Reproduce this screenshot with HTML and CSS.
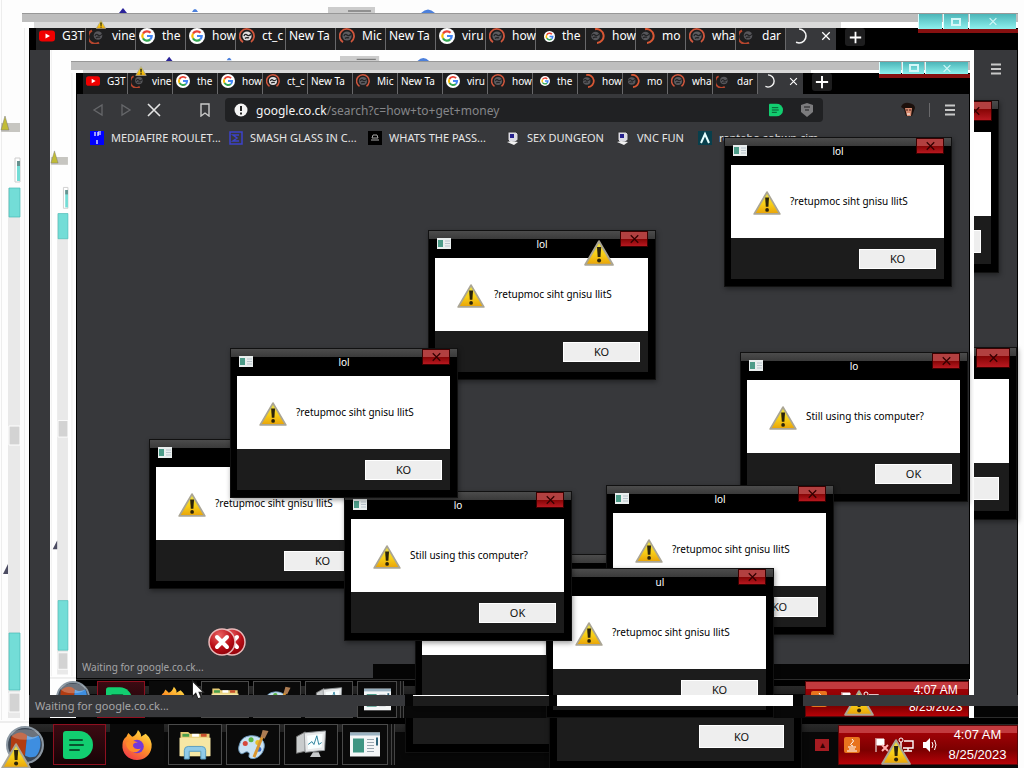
FILE: index.html
```html
<!DOCTYPE html>
<html lang="en">
<head>
<meta charset="utf-8">
<title>Desktop</title>
<link rel="stylesheet" href="styles.css">
</head>
<body>
<svg class="defs" aria-hidden="true">
  <defs>
    <linearGradient id="gold" x1="0" y1="0" x2="0" y2="1"><stop offset="0" stop-color="#e8e04a"/><stop offset=".55" stop-color="#f8cf18"/><stop offset="1" stop-color="#e8a208"/></linearGradient>
    <radialGradient id="redball" cx=".4" cy=".25" r=".8"><stop offset="0" stop-color="#ec6464"/><stop offset=".6" stop-color="#b80d16"/><stop offset="1" stop-color="#8c0008"/></radialGradient>
    <linearGradient id="fox" x1=".8" y1="0" x2=".2" y2="1"><stop offset="0" stop-color="#ffe14a"/><stop offset=".45" stop-color="#ff9a26"/><stop offset="1" stop-color="#f0354c"/></linearGradient>
  </defs>
  <symbol id="warn" viewBox="0 0 30 26"><path d="M15 1.2 28.8 24.8H1.2Z" fill="url(#gold)" stroke="#aaa594" stroke-width="2" stroke-linejoin="round"/><path d="M13 7h4.200l-.7 10h-2.800Z" fill="#2a230a"/><circle cx="15.100" cy="20.500" r="2" fill="#2a230a"/></symbol>
  <symbol id="error" viewBox="0 0 28 28"><circle cx="14" cy="14" r="13" fill="url(#redball)" stroke="#e8b8b8" stroke-width="1.500"/><path d="m9 9 10 10M19 9 9 19" stroke="#fff" stroke-width="4" stroke-linecap="round"/></symbol>
  <symbol id="yt" viewBox="0 0 16 16"><rect y="2.500" width="16" height="11" rx="3" fill="#f00000"/><path d="m6.500 5.500 4.500 2.500-4.500 2.500Z" fill="#fff"/></symbol>
  <symbol id="goog" viewBox="0 0 16 16"><circle cx="8" cy="8" r="8" fill="#fff"/><g fill="none" stroke-width="2.200"><path d="M11.500 4.800A4.700 4.700 0 0 0 4 5.600" stroke="#ea4335"/><path d="M4 5.600a4.700 4.700 0 0 0 0 4.800" stroke="#fbbc05"/><path d="M4 10.400a4.700 4.700 0 0 0 7.200 1" stroke="#34a853"/><path d="M11.200 11.400A4.600 4.600 0 0 0 12.700 8H8" stroke="#4285f4"/></g></symbol>
  <symbol id="swirl" viewBox="0 0 16 16"><path d="M3 2.500A7 7 0 1 0 10 14.600" fill="none" stroke="#b6462e" stroke-width="2"/><circle cx="9" cy="7.500" r="4.300" fill="#56565a"/><path d="M6 8c1-3 3-1 3-1s2 2 4-1M7 10c2-2 3 0 4-1" fill="none" stroke="#242426" stroke-width="1.200"/></symbol>
  <symbol id="swirlr" viewBox="0 0 16 16"><path d="M6 1.200A7 7 0 1 1 8 15" fill="none" stroke="#d85734" stroke-width="2"/><circle cx="6.500" cy="8" r="4.300" fill="#56565a"/><path d="M3 8c1-3 3-1 3-1s2 2 4-1M4 10c2-2 3 0 4-1" fill="none" stroke="#242426" stroke-width="1.200"/></symbol>
  <symbol id="swirlw" viewBox="0 0 16 16"><path d="M4 14.200A7.200 7.200 0 1 1 12 14" fill="none" stroke="#cf563c" stroke-width="1.800"/><circle cx="8" cy="8" r="4.600" fill="#e0dede"/><path d="M5 8c1-3 3-1 3-1s2 2 4-1M6 10.500c2-2 3 0 4-1" fill="none" stroke="#242426" stroke-width="1.400"/></symbol>
  <symbol id="swirlg" viewBox="0 0 16 16"><path d="M4 14.200A7.200 7.200 0 1 1 12 14" fill="none" stroke="#cf563c" stroke-width="1.800"/><circle cx="8" cy="8" r="4.600" fill="#5c5c60"/><path d="M5 8c1-3 3-1 3-1s2 2 4-1M6 10.500c2-2 3 0 4-1" fill="none" stroke="#242426" stroke-width="1.400"/></symbol>
  <symbol id="spin" viewBox="0 0 16 16"><path d="M8 1a7 7 0 0 1 0 14l-3-.8" fill="none" stroke="#f4f4f4" stroke-width="1.600"/></symbol>
  <symbol id="x" viewBox="0 0 16 16"><path d="m2 2 12 12M14 2 2 14" stroke="currentColor" stroke-width="2" fill="none"/></symbol>
  <symbol id="plus" viewBox="0 0 16 16"><path d="M8 1v14M1 8h14" stroke="#fff" stroke-width="2.200"/></symbol>
  <symbol id="menu" viewBox="0 0 12 12"><path d="M1 1.500h10M1 6h10M1 10.500h10" stroke="#c8c8c8" stroke-width="1.800"/></symbol>
  <symbol id="appico" viewBox="0 0 14 11"><path fill="#e9eeee" d="M0 0h14v11H0z"/><path fill="#4c9b88" d="M1 2h5v7H1z"/><path stroke="#b8c4cc" d="M8 3h5M8 5.500h5M8 8h5"/></symbol>
  <symbol id="orb" viewBox="0 0 36 36"><circle cx="18" cy="18" r="17" fill="#3b4552" stroke="#8b97a2" stroke-width="2"/><path d="M5 10C12 4 17 6 20 9L18 28C11 24 7 26 4 27Z" fill="#b13c12"/><path d="M20 9c5 3 8 1 11 0 3 6 2 15-3 20-4 1-7 1-10-1Z" fill="#3e8ee0"/><ellipse cx="18" cy="8" rx="13" ry="5" fill="#fff" opacity=".25"/></symbol>
  <symbol id="green" viewBox="0 0 30 28"><path d="M0 3Q0 0 3 0h13a14 14 0 0 1 0 28H3q-3 0-3-3Z" fill="#12ce70"/><path d="M7 9h12M7 14h13M7 19h9" stroke="#08552f" stroke-width="2" stroke-linecap="round"/></symbol>
  <symbol id="firefox" viewBox="0 0 32 32"><path d="M5 8l2-4 4 4q4-1 6-7 4 4 3 7l5-3q7 6 6 14C30 27 23 32 16 32 7 32 0 25 1 16Q1 11 5 8Z" fill="url(#fox)"/><circle cx="16" cy="18" r="7" fill="#7438d8"/><path d="M5 14q5-4 12 0-6 0-5 4 2 4 8 2-5 7-12 2-4-4-3-8Z" fill="#ff8d2b"/></symbol>
  <symbol id="folder" viewBox="0 0 32 32"><path d="M1 3h8l2 2h20v23H1Z" fill="#e7cd76"/><path d="M3 5h7v3H3z" fill="#4aa04d"/><path d="M13 5h7v3h-7z" fill="#fff"/><path d="M22 5h6v3h-6z" fill="#c9502e"/><path d="M0 9h32v19H0Z" fill="#f6e7a4"/><path d="M5 31v-9q0-4 4-4h14q4 0 4 4v9h-5v-8H10v8Z" fill="#90cbe8" stroke="#5a9dc0"/></symbol>
  <symbol id="paint" viewBox="0 0 32 32"><path d="M2 16Q4 8 13 7c10-1 17 6 14 14-2 7-9 11-14 9-3-2 1-5-2-6-3-2-5 3-8 1Q0 22 2 16Z" fill="#c9e2f4" stroke="#6f9ec2"/><circle cx="8" cy="15" r="2.600" fill="#d6483c"/><circle cx="14" cy="11" r="2.600" fill="#59b441"/><circle cx="21" cy="14" r="2.600" fill="#e8bd2a"/><circle cx="22" cy="21" r="2.600" fill="#3569cc"/><path d="M17 29 26 7" stroke="#d9952e" stroke-width="3"/><path d="m24 8 2-7 6 1-4 8Z" fill="#ad7c52"/></symbol>
  <symbol id="monitor" viewBox="0 0 32 32"><path d="M1 8 10 3v20L1 25Z" fill="#c9cccd" stroke="#777"/><path d="m9 4 22-2-1 20-20 2Z" fill="#e7e9ea" stroke="#989c9f"/><path d="m12 7 16-2-1 14-14 2Z" fill="#f9ffff"/><path d="m13 16 4-3 2 3 3-9 2 9 3-2" fill="none" stroke="#28809c"/><path d="M18 24h6l2 5H15Z" fill="#c7cacb"/></symbol>
  <symbol id="card" viewBox="0 0 30 24"><path d="M0 0h30v24H0z" fill="#f4f6f7"/><path d="M0 0h30v3H0z" fill="#9bb3c2"/><path d="M3 6h11v14H3z" fill="#3e9582"/><path d="M17 7h7M17 10h7M17 13h7M17 16h7M17 19h7" stroke="#9aa7b0"/><path d="M26 5h2v8h-2z" fill="#30667c"/></symbol>
  <symbol id="pc" viewBox="0 0 14 14"><path d="M2 1h8l2 2v6L9 11H4L2 9Z" fill="#dcdce4" stroke="#333"/><path d="M4 3h4v4H4z" fill="#24208c"/><path d="m1 11 4-1 7 1-4 3Z" fill="#f0f0f0"/></symbol>
  <symbol id="flag" viewBox="0 0 16 16"><path d="M2 1v14M3 2h7v6H3z" stroke="#fff" fill="#fff"/><path d="m8 8 6 6M14 8l-6 6" stroke="#ffb0b0" stroke-width="2"/></symbol>
  <symbol id="net" viewBox="0 0 16 16"><path d="M6 4h9v7H5M10 11v3M6 14h8M3 5v8" fill="none" stroke="#fff" stroke-width="1.400"/><circle cx="3" cy="3" r="2" fill="none" stroke="#fff"/></symbol>
  <symbol id="sound" viewBox="0 0 16 16"><path d="M1 5h3l4-4v14l-4-4H1Z" fill="#fff"/><path d="M10 5q2 3 0 6M12.500 3q3 5 0 10" fill="none" stroke="#fff"/></symbol>
  <symbol id="java" viewBox="0 0 16 16"><rect width="16" height="16" rx="2" fill="#e8741e"/><path d="M8 2q3 2 0 4t1 3M4 10h8M5 12h6M3 14h10" fill="none" stroke="#fff"/></symbol>
  <symbol id="ghost" viewBox="0 0 29 768">
    <path d="M1.500 0v720M24.500 26v694" stroke="#ededed"/><path d="M1 123h19v9H1z" fill="#c7c6c1"/><path d="m1 130 4-14 4 14Z" fill="#c2bc35" stroke="#777" stroke-width=".5"/><path d="M15 158h5v24h-5z" fill="#fff" stroke="#ccc"/><path d="M17 161h3v20h-3z" fill="#74ddd6"/><path d="M17 161h3v5h-3z" fill="#67918e"/>
    <path d="M8 188h12v530H8z" fill="#e9e9e9"/><path d="M9 188h11v29H9zM9 633h11v57H9z" fill="#73ddd7" stroke="#48b9b4" stroke-width=".7"/><path d="M9 426h11v19H9zM9 693h11v19H9z" fill="#d3d3d3" stroke="#fff"/><path d="M3 574l5-10v10Z" fill="#4c4c62"/><path d="M0 722h29" stroke="#ddd"/>
  </symbol>
</svg>

<div class="desktop">
  <svg class="ghost ghost-outer" viewBox="0 0 29 768"><use href="#ghost"/></svg>
  <svg class="crumbs" viewBox="0 0 500 6"><path d="m119 6 4-5 4 5Z" fill="#2b249a"/><path d="M192 5q3-6 6 0ZM421 6q7-7 14 0Z" fill="#4c80dc"/><path d="M328 0h47v6h-47z" fill="#ccc"/><path d="M348 4h23" stroke="#555"/></svg>

  <section class="window window-outer">
    <div class="glass"><span class="glow"></span>
      <div class="controls"><button aria-label="Minimize"></button><button aria-label="Maximize"><i></i></button><button aria-label="Close"><svg><use href="#x"/></svg></button></div>
    </div>
    <div class="client">
      <nav class="tabs">
        <a href="#"><svg><use href="#yt"/></svg><span>G3T</span></a><a href="#"><svg><use href="#swirl"/></svg><span>vine</span></a><a href="#"><svg><use href="#goog"/></svg><span>the</span></a><a href="#"><svg><use href="#goog"/></svg><span>how</span></a><a href="#"><svg><use href="#swirlw"/></svg><span>ct_c</span></a><a href="#"><span>New Ta</span></a><a href="#"><svg><use href="#swirlg"/></svg><span>Mic</span></a><a href="#"><span>New Ta</span></a><a href="#"><svg><use href="#goog"/></svg><span>viru</span></a><a href="#"><svg><use href="#swirlg"/></svg><span>how</span></a><a href="#"><svg class="tiny"><use href="#goog"/></svg><span>the</span></a><a href="#"><svg><use href="#swirlr"/></svg><span>how</span></a><a href="#"><svg><use href="#swirlr"/></svg><span>mo</span></a><a href="#"><svg><use href="#swirlg"/></svg><span>wha</span></a><a href="#"><svg><use href="#swirl"/></svg><span>dar</span></a><a href="#" class="active"><svg><use href="#spin"/></svg><svg class="close"><use href="#x"/></svg></a>
        <button class="add" aria-label="New tab"><svg><use href="#plus"/></svg></button>
      </nav>
      <div class="page"><button class="menu" aria-label="Menu"><svg><use href="#menu"/></svg></button></div>
      <div class="edge"></div>
    </div>
  </section>

  <footer class="taskbar taskbar-outer">
    <button class="start" aria-label="Start"><svg><use href="#orb"/></svg></button>
    <div class="tasks">
      <button class="red" aria-label="Notes"><svg><use href="#green"/></svg></button><button class="plain" aria-label="Firefox"><svg><use href="#firefox"/></svg></button><button aria-label="Files"><svg><use href="#folder"/></svg></button><button aria-label="Paint"><svg><use href="#paint"/></svg></button><button aria-label="Monitor"><svg><use href="#monitor"/></svg></button><button class="stack" aria-label="Programs"><svg><use href="#card"/></svg></button>
    </div>
    <button class="more" aria-label="Show hidden icons">▴</button>
    <div class="tray"><svg><use href="#java"/></svg><svg class="gap"><use href="#flag"/></svg><svg><use href="#net"/></svg><svg><use href="#sound"/></svg><div class="clock"><span>4:07 AM</span><span>8/25/2023</span></div></div>
  </footer>

  <section class="dialog big o1"><header><button class="shut" aria-label="Close"><svg><use href="#x"/></svg></button></header><div class="message"></div><div class="actions"><button></button></div></section>
  <section class="dialog big o2"><header><button class="shut" aria-label="Close"><svg><use href="#x"/></svg></button></header><div class="message"></div><div class="actions"><button></button></div></section>
  <section class="dialog big o3"><header></header><div class="message"></div><div class="actions"></div></section>
  <section class="dialog big o4"><header></header><div class="message"></div><div class="actions"><button>KO</button></div></section>

  <main class="screen">
    <svg class="ghost ghost-inner" viewBox="0 0 29 768" preserveAspectRatio="none"><use href="#ghost"/></svg>
    <svg class="crumbs crumbs-inner" viewBox="0 0 500 6"><path d="m119 6 4-5 4 5Z" fill="#2b249a"/><path d="M192 5q3-6 6 0ZM421 6q7-7 14 0Z" fill="#4c80dc"/><path d="M328 0h47v6h-47z" fill="#ccc"/><path d="M348 4h23" stroke="#555"/></svg>
    <section class="window window-inner">
      <div class="glass"><span class="glow"></span>
        <div class="controls"><button aria-label="Minimize"></button><button aria-label="Maximize"><i></i></button><button aria-label="Close"><svg><use href="#x"/></svg></button></div>
      </div>
      <div class="client">
        <nav class="tabs">
          <a href="#"><svg><use href="#yt"/></svg><span>G3T</span></a><a href="#"><svg><use href="#swirl"/></svg><span>vine</span></a><a href="#"><svg><use href="#goog"/></svg><span>the</span></a><a href="#"><svg><use href="#goog"/></svg><span>how</span></a><a href="#"><svg><use href="#swirlw"/></svg><span>ct_c</span></a><a href="#"><span>New Ta</span></a><a href="#"><svg><use href="#swirlg"/></svg><span>Mic</span></a><a href="#"><span>New Ta</span></a><a href="#"><svg><use href="#goog"/></svg><span>viru</span></a><a href="#"><svg><use href="#swirlg"/></svg><span>how</span></a><a href="#"><svg class="tiny"><use href="#goog"/></svg><span>the</span></a><a href="#"><svg><use href="#swirlr"/></svg><span>how</span></a><a href="#"><svg><use href="#swirlr"/></svg><span>mo</span></a><a href="#"><svg><use href="#swirlg"/></svg><span>wha</span></a><a href="#"><svg><use href="#swirl"/></svg><span>dar</span></a><a href="#" class="active"><svg><use href="#spin"/></svg><svg class="close"><use href="#x"/></svg></a>
          <button class="add" aria-label="New tab"><svg><use href="#plus"/></svg></button>
        </nav>
        <div class="page">
          <div class="toolbar">
            <button aria-label="Back"><svg viewBox="0 0 12 14"><path d="M10 2v10L2 7Z" fill="none" stroke="#66676a" stroke-width="1.300"/></svg></button>
            <button aria-label="Forward"><svg viewBox="0 0 12 14"><path d="M2 2v10l8-5Z" fill="none" stroke="#66676a" stroke-width="1.300"/></svg></button>
            <button aria-label="Stop"><svg viewBox="0 0 14 14"><path d="m1 1 12 12M13 1 1 13" stroke="#e4e4e4" stroke-width="1.600"/></svg></button>
            <button class="mark" aria-label="Bookmark"><svg viewBox="0 0 12 14"><path d="M2 1h8v12l-4-3-4 3Z" fill="none" stroke="#cacaca" stroke-width="1.400"/></svg></button>
            <div class="address"><svg viewBox="0 0 14 14"><circle cx="7" cy="7" r="6.500" fill="#f4f4f4"/><path d="M7 3v5M7 9.500v2" stroke="#222" stroke-width="2"/></svg><span><b>google.co.ck</b>/search?c=how+to+get+money</span>
              <svg class="ext" viewBox="0 0 30 28"><use href="#green"/></svg><svg class="shield" viewBox="0 0 14 14"><path d="M1 2 7 0l6 2v7l-6 5-6-5Z" fill="#7c7c7e"/><path d="M4 4h6M5 7h4" stroke="#4d4d4f" stroke-width="2"/></svg></div>
            <svg class="face" viewBox="0 0 14 16"><path d="M0 5Q2 0 8 1q6 1 6 5l-3 8H5L3 7Z" fill="#1c100c"/><path d="M4 6h7l-1 8H6Z" fill="#d98b70"/><path d="M5 8h2M8 8h2" stroke="#401b14"/><path d="M6 12h3" stroke="#fff"/></svg>
            <span class="rule"></span>
            <button aria-label="Menu"><svg viewBox="0 0 12 12"><use href="#menu"/></svg></button>
          </div>
          <div class="bookmarks">
            <a class="b1" href="#"><svg viewBox="0 0 14 14"><path d="M0 0h14v14H0z" fill="#00f"/><path d="M5 1v4M8 1v4M8 1h3M8 3h3M7 9v4" stroke="#fff" stroke-width="1.200"/></svg>MEDIAFIRE ROULET...</a>
            <a class="b2" href="#"><svg viewBox="0 0 14 14"><path d="M1 1h12v12H1zM10 4H4l4 3-4 3h6" fill="none" stroke="#3d42ca" stroke-width="1.500"/></svg>SMASH GLASS IN C...</a>
            <a class="b3" href="#"><svg viewBox="0 0 14 14"><path d="M0 0h14v14H0z"/><path d="M3 9h8M4 7l1-3h4l1 3Z" fill="none" stroke="#aaa"/></svg>WHATS THE PASS...</a>
            <a class="b4" href="#"><svg viewBox="0 0 14 14"><use href="#pc"/></svg>SEX DUNGEON</a>
            <a class="b5" href="#"><svg viewBox="0 0 14 14"><use href="#pc"/></svg>VNC FUN</a>
            <a href="#"><svg viewBox="0 0 14 14"><path d="M0 0h14v14H0z" fill="#083f4c"/><path d="m3 12 4-9 4 9" fill="none" stroke="#e7ffff" stroke-width="2"/></svg>rentabo.sohwp.cim</a>
          </div>
        </div>
        <div class="edge"><span class="status">Waiting for google.co.ck...</span></div>
      </div>
    </section>

    <footer class="taskbar taskbar-inner">
      <button class="start" aria-label="Start"><svg><use href="#orb"/></svg></button>
      <div class="tasks">
        <button class="red" aria-label="Notes"><svg><use href="#green"/></svg></button><button class="plain" aria-label="Firefox"><svg><use href="#firefox"/></svg></button><button aria-label="Files"><svg><use href="#folder"/></svg></button><button aria-label="Paint"><svg><use href="#paint"/></svg></button><button aria-label="Monitor"><svg><use href="#monitor"/></svg></button><button class="stack" aria-label="Programs"><svg><use href="#card"/></svg></button>
      </div>
      <div class="tray"><svg><use href="#java"/></svg><svg class="gap"><use href="#flag"/></svg><svg><use href="#net"/></svg><svg class="mute"><use href="#sound"/></svg><div class="clock"><span>4:07 AM</span><span>8/25/2023</span></div></div>
    </footer>

    <section class="dialog d9"><header></header><div class="message"></div><div class="actions"></div></section>
    <section class="dialog d1"><header><svg><use href="#appico"/></svg><h2>lol</h2><button class="shut" aria-label="Close"><svg><use href="#x"/></svg></button></header><div class="message"><svg><use href="#warn"/></svg><p>?retupmoc siht gnisu llitS</p></div><div class="actions"><button>KO</button></div></section>
    <section class="dialog d2"><header><svg><use href="#appico"/></svg><h2>lol</h2><button class="shut" aria-label="Close"><svg><use href="#x"/></svg></button></header><div class="message"><svg><use href="#warn"/></svg><p>?retupmoc siht gnisu llitS</p></div><div class="actions"><button>KO</button></div></section>
    <section class="dialog d4"><header><svg><use href="#appico"/></svg></header><div class="message"><svg><use href="#warn"/></svg><p>?retupmoc siht gnisu llitS</p></div><div class="actions"><button>KO</button></div></section>
    <section class="dialog d6"><header><svg><use href="#appico"/></svg><h2>lo</h2><button class="shut" aria-label="Close"><svg><use href="#x"/></svg></button></header><div class="message"><svg><use href="#warn"/></svg><p>Still using this computer?</p></div><div class="actions"><button>OK</button></div></section>
    <section class="dialog d7"><header><svg><use href="#appico"/></svg><h2>lol</h2><button class="shut" aria-label="Close"><svg><use href="#x"/></svg></button></header><div class="message"><svg><use href="#warn"/></svg><p>?retupmoc siht gnisu llitS</p></div><div class="actions"><button>KO</button></div></section>
    <section class="dialog d8"><header><h2>ul</h2><button class="shut" aria-label="Close"><svg><use href="#x"/></svg></button></header><div class="message"><svg><use href="#warn"/></svg><p>?retupmoc siht gnisu llitS</p></div><div class="actions"><button>KO</button></div></section>
    <section class="dialog d5"><header><svg><use href="#appico"/></svg><h2>lo</h2><button class="shut" aria-label="Close"><svg><use href="#x"/></svg></button></header><div class="message"><svg><use href="#warn"/></svg><p>Still using this computer?</p></div><div class="actions"><button>OK</button></div></section>
    <section class="dialog d3"><header><svg><use href="#appico"/></svg><h2>lol</h2><button class="shut" aria-label="Close"><svg><use href="#x"/></svg></button></header><div class="message"><svg><use href="#warn"/></svg><p>?retupmoc siht gnisu llitS</p></div><div class="actions"><button>KO</button></div></section>
    <svg class="float w1"><use href="#warn"/></svg>
    <svg class="float e1"><use href="#error"/></svg>
    <svg class="float e2"><use href="#error"/></svg>
    <svg class="float w2"><use href="#warn"/></svg>
    <svg class="float w5" viewBox="0 0 30 26"><use href="#warn"/></svg>
  </main>

  <div class="band"><span class="grey lead"></span><span class="panel"></span><span class="white"></span><span class="grey rest"></span></div>
  <div class="status status-outer">Waiting for google.co.ck...</div>
  <svg class="float w3"><use href="#warn"/></svg>
  <svg class="float w4"><use href="#warn"/></svg>
  <svg class="float w6" viewBox="0 0 30 26"><use href="#warn"/></svg>
  <svg class="cursor" viewBox="0 0 12 18"><path d="M1 1v14l3-3 2 5 3-1-2-5h4Z" fill="#fff" stroke="#222"/></svg>
</div>
</body>
</html>
```
FILE: styles.css
```css
* { box-sizing: border-box; }
body { margin: 0; font-family: "Noto Sans", "Open Sans", sans-serif; color: #fff; }
button { margin: 0; padding: 0; border: 0; background: none; color: inherit; font: inherit; }
a { color: inherit; text-decoration: none; }
svg { display: block; flex: none; }
.defs { position: absolute; width: 0; height: 0; }
.desktop { position: relative; min-height: 100vh; overflow: hidden; background: #fdfdfd; }

.ghost { position: absolute; left: 0; top: 0; width: 29px; height: 768px; }
.ghost-inner { width: 26px; height: 668px; }
.crumbs { position: absolute; left: 0; top: 7px; width: 500px; height: 6px; }
.crumbs-inner { width: 450px; height: 5px; top: 6px; }

/* browser windows */
.window { position: absolute; display: flex; flex-direction: column; }
.window-outer { inset: 13px 6px 50px 22px; }
.window-inner { inset: 11px 4px 39px 21px; }
.glass { display: flex; align-items: stretch; justify-content: space-between; flex: none; height: 15px; border-top: 1px solid #989898; background: linear-gradient(#bebebe 8px, #fff 8px); }
.glow { flex: none; width: 81%; margin: 8px 0 0 12px; background: #dadada; }
.window-inner .glass { height: 12px; }
.controls { display: flex; flex: none; width: 100px; height: 19px; padding-right: 2px; gap: 1px; border-bottom: 4px solid #861010; z-index: 1; }
.controls button { display: flex; align-items: center; justify-content: center; flex: 1; background: linear-gradient(#4cb5b8, #8df0ed); border-left: 1px solid #d8ffff; }
.controls button:last-child { flex: 2; }
.controls i { width: 10px; height: 8px; border: 2px solid #d5f8f8; }
.controls svg { width: 10px; height: 9px; color: #d5f8f8; }
.window-inner .controls { width: 91px; height: 16px; }
.client { display: flex; flex-direction: column; flex: 1; margin-left: 7px; background: #37383b; min-height: 0; }
.window-inner .client { margin-left: 5px; border-left: 1px solid #000; border-right: 1px solid #000; }
.tabs { display: flex; flex: none; height: 22px; padding-left: 7px; background: #000; font-size: 12px; }
.tabs a { display: flex; align-items: center; flex: none; gap: 7px; width: 50px; padding: 0 0 6px 3px; white-space: nowrap; background: #1e1e1f; border-right: 1px solid #68686a; line-height: 16px; }
.tabs svg { width: 16px; height: 16px; }
.tabs svg.tiny { width: 11px; height: 11px; margin-left: 5px; }
.tabs a.active { background: #37383b; gap: 14px; border: 0; padding-left: 5px; }
.tabs svg.close { width: 10px; height: 10px; }
.add { display: flex; align-items: center; justify-content: center; width: 20px; height: 18px; margin-left: 9px; border-radius: 3px; background: #1d1d1e; }
.add svg { width: 13px; height: 13px; }
.window-inner .tabs { height: 21px; font-size: 10px; padding-left: 6px; }
.window-inner .tabs a { width: 45px; padding: 0 0 5px 3px; }
.window-inner .tabs svg { width: 14px; height: 14px; }
.window-inner .tabs svg.tiny { width: 10px; height: 10px; margin-left: 4px; }
.window-inner .tabs svg.close { width: 9px; height: 9px; }
.page { flex: 1; min-height: 0; }
.window-outer .page { border-left: 1px solid #000; border-right: 1px solid #000; }
.window-outer .menu { display: block; margin: 13px 15px 0 auto; width: 12px; }
.menu svg { width: 12px; height: 12px; }
.toolbar { display: flex; align-items: center; height: 32px; padding: 0 13px 0 14px; }
.toolbar svg { width: 14px; height: 14px; }
.toolbar > button { flex: none; width: 14px; margin-right: 14px; }
.toolbar > .mark { margin: 0 13px 0 23px; }
.toolbar > button:last-child { width: 12px; margin: 0; }
.toolbar > button:last-child svg { width: 12px; height: 12px; }
.address { display: flex; align-items: center; flex: 1; height: 24px; margin-right: 78px; padding: 0 9px; gap: 8px; border-radius: 4px; background: #202123; color: #858689; font-size: 12px; }
.address span { flex: 1; }
.address b { font-weight: 400; color: #f4f4f4; }
.address .shield { margin-left: 9px; }
.toolbar .face { height: 16px; margin-right: 14px; }
.rule { width: 1px; height: 14px; margin-right: 14px; background: #69696b; }
.bookmarks { display: flex; align-items: center; height: 23px; padding-left: 13px; font-size: 11px; white-space: nowrap; }
.bookmarks a { display: flex; flex: none; align-items: center; gap: 7px; color: #e6e6e6; }
.bookmarks svg { width: 14px; height: 14px; }
.b1, .b2 { width: 139px; }
.b3 { width: 138px; }
.b4 { width: 110px; }
.b5 { width: 82px; }
.edge { flex: none; height: 15px; background: #050505; display: flex; align-items: flex-end; }
.window-outer .edge { height: 12px; }
.status { width: 296px; height: 22px; margin-bottom: 1px; padding-left: 5px; background: #37383b; color: #a6a6a8; font-size: 10px; line-height: 22px; }
.status-outer { position: absolute; left: 29px; bottom: 51px; width: 328px; margin: 0; padding-left: 6px; font-size: 11px; line-height: 22px; }

/* nested desktop inside the outer page */
.screen { position: absolute; inset: 50px 50px 50px 50px; overflow: hidden; background: #fefefe; }

/* message boxes */
.dialog { position: absolute; width: 228px; padding: 0 7px 7px 6px; border: 1px solid #111; background: #000; color: #111; box-shadow: 1px 2px 5px #0006; }
.dialog header { display: grid; grid-template-columns: 1fr 40px 1fr; align-items: start; height: 27px; margin: 0 -7px 0 -6px; background: linear-gradient(#4c4c4c, #3a3a3a 8px, #000 8px); }
.dialog header > svg { width: 14px; height: 11px; margin: 7px 0 0 8px; }
.dialog h2 { grid-column: 2; margin: 6px 0 0; color: #fff; font-size: 10px; font-weight: 400; line-height: 14px; text-align: center; }
.shut { grid-column: 3; grid-row: 1; justify-self: end; display: flex; align-items: center; justify-content: center; width: 28px; height: 16px; margin-right: 7px; border: 1px solid #3b0000; background: linear-gradient(#b24040 7px, #850505 7px, #b81820); color: #300; }
.shut svg { width: 13px; height: 10px; }
.message { display: flex; align-items: center; height: 73px; padding: 0 0 0 22px; gap: 9px; background: #fff; }
.message svg { width: 28px; height: 24px; margin-top: 2px; }
.message p { margin: 0 0 2px; font-size: 10px; line-height: 14px; white-space: nowrap; color: #000; }
.actions { height: 41px; padding: 11px 8px 0 0; background: #1c1c1c; }
.actions button { display: block; width: 77px; height: 20px; margin-left: auto; border: 1px solid #fff; background: #eee; font-size: 11px; line-height: 18px; }
.big { width: 253px; padding: 0 7px 8px; }
.big header { height: 31px; margin: 0 -7px; }
.big .message { height: 84px; }
.big .actions { height: 48px; padding: 14px 10px 0 0; }
.big .actions button { width: 85px; height: 23px; line-height: 21px; }
.big .shut { width: 34px; height: 20px; margin-right: 6px; }
.o1 { left: 746px; top: 100px; }
.o2 { left: 764px; top: 347px; }
.o3 { left: 405px; top: 580px; }
.o4 { left: 549px; top: 596px; }
.o4 .actions { height: 49px; padding-top: 13px; }
.d1 { left: 674px; top: 87px; }
.d2 { left: 378px; top: 180px; }
.d3 { left: 180px; top: 298px; }
.d4 { left: 99px; top: 389px; }
.d5 { left: 294px; top: 441px; }
.d6 { left: 690px; top: 302px; }
.d7 { left: 556px; top: 435px; }
.d8 { left: 496px; top: 518px; }
.d9 { left: 365px; top: 504px; }

/* taskbars */
.taskbar { position: absolute; left: 29px; right: 6px; bottom: 0; display: flex; align-items: center; height: 51px; background: linear-gradient(#2c2c2c 1px, #000 1px, #000 7px, #292929 7px, #202020 15px, #080808 15px); font-family: "Liberation Sans", sans-serif; }
.taskbar-outer { padding-top: 4px; }
.start { flex: none; width: 24px; }
.start svg { width: 38px; height: 38px; margin-left: -23px; }
.tasks { display: flex; flex: 1; gap: 4px; }
.tasks button { display: flex; align-items: center; justify-content: center; width: 54px; height: 41px; border: 1px solid #4a4a4a; background: #0a0a0a; }
.tasks svg { width: 32px; height: 31px; }
.tasks .red { border-color: #8e1020; background: linear-gradient(#3c0a12, #180306); width: 53px; padding-right: 4px; }
.tasks .red svg { width: 30px; height: 28px; }
.tasks .plain { border-color: transparent; }
.tasks .stack { box-shadow: 3px 0 #111, 4px 0 #444, 6px 0 #111, 7px 0 #444; width: 46px; }
.tasks .stack svg { width: 30px; height: 25px; }
.more { width: 14px; height: 12px; margin: 0 9px 0 0; background: #a51c22; color: #300; font-size: 10px; line-height: 10px; }
.tray { display: flex; align-items: center; gap: 8px; width: 180px; height: 40px; padding: 0 8px 0 5px; background: linear-gradient(#c23a3e 7px, #9e0206 7px, #7c0000 24px, #b50207); border: 1px solid #5a0608; }
.tray svg { width: 16px; height: 16px; }
.tray .gap { margin-left: 6px; }
.clock { display: flex; flex: 1; flex-direction: column; align-items: center; font-size: 13px; line-height: 20px; }
.taskbar-inner { left: 26px; right: 5px; height: 39px; align-items: flex-start; padding-top: 2px; }
.taskbar-inner .start { width: 21px; }
.taskbar-inner .start svg { width: 34px; height: 34px; margin-left: -20px; }
.taskbar-inner .tasks button { width: 48px; height: 37px; }
.taskbar-inner .tasks svg { width: 28px; height: 27px; }
.taskbar-inner .tasks .red svg { width: 26px; height: 25px; }
.taskbar-inner .tasks .stack { width: 40px; }
.taskbar-inner .tasks .stack svg { width: 27px; height: 23px; }
.taskbar-inner .tray { width: 164px; height: 36px; padding-right: 6px; gap: 7px; }
.taskbar-inner .clock { line-height: 17px; font-size: 12px; }
.taskbar-inner .mute { visibility: hidden; }

/* repeated strip of the outer page */
.band { position: absolute; left: 29px; right: 6px; bottom: 62px; display: flex; height: 11px; background: #050505; }
.grey { background: #37383b; }
.lead { width: 376px; }
.panel { width: 136px; margin: 0 8px; border-top: 1px solid #fff; background: #1c1c1c; }
.white { width: 236px; margin-right: 10px; background: #fff; }
.rest { flex: 1; }

.float { position: absolute; width: 30px; height: 26px; }
.w1 { left: 534px; top: 190px; }
.e1, .e2 { top: 578px; width: 28px; height: 28px; }
.e1 { left: 168px; }
.e2 { left: 158px; }
.w2 { left: 794px; top: 640px; }
.w3 { left: 881px; top: 739px; }
.w4 { left: 1px; top: 743px; }
.w5 { left: 85px; top: 16px; width: 12px; height: 10px; }
.w6 { left: 95px; top: 20px; width: 12px; height: 9px; }
.cursor { position: absolute; left: 191px; top: 680px; width: 14px; height: 20px; }
```
